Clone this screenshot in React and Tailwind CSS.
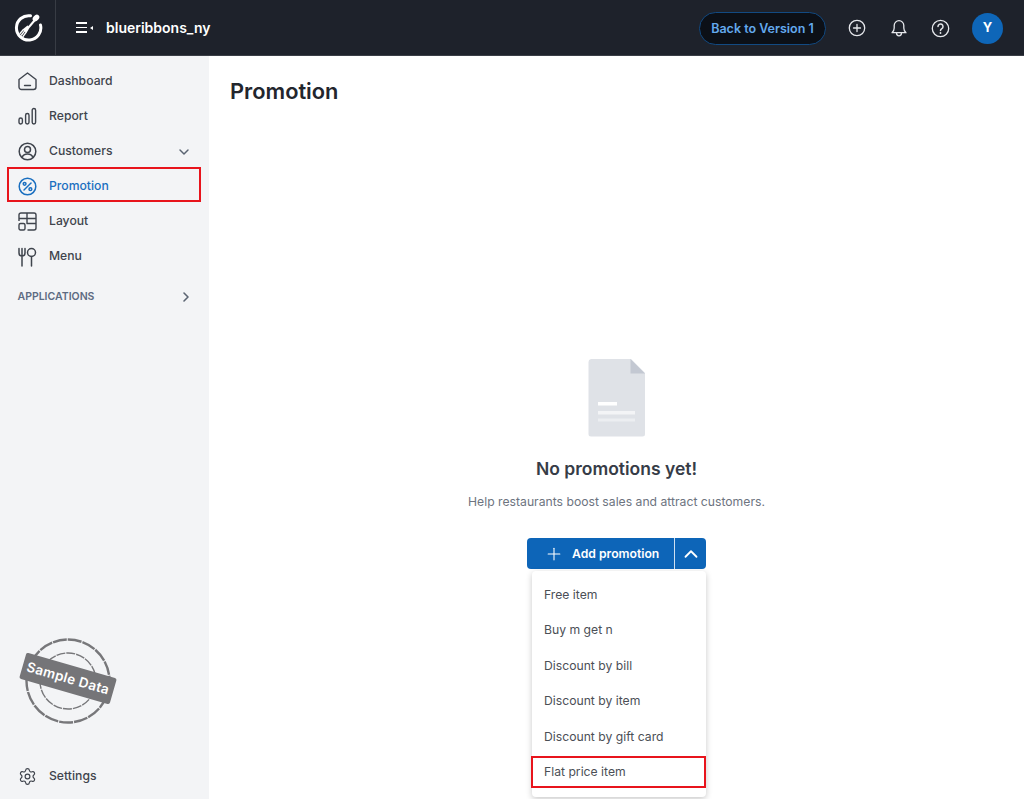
import React from 'react';
import { ChevronDown, ChevronRight, ChevronUp, Plus, Settings } from 'lucide-react';

const LogoIcon = () => (
  <svg width="30" height="30" viewBox="0 0 30 30" fill="none" stroke="#fff">
    <path d="M17.500 2.800A12.200 12.200 0 1 0 27.500 12" strokeWidth="3" strokeLinecap="round" />
    <ellipse cx="23" cy="5" rx="2.800" ry="3.800" transform="rotate(42 23 5)" fill="#fff" stroke="none" />
    <path d="M21.500 7.500 16 14" strokeWidth="2" />
    <path d="M17 14 13.500 20 9.500 16.500 14.500 12.500Z" fill="#fff" stroke="none" />
    <path d="M10 17 7 20.500M11.500 18.200 8.500 22M13 19.500 10 23.500" strokeWidth="1.300" strokeLinecap="round" />
  </svg>
);

const HomeIcon = () => (
  <svg width="19" height="19" viewBox="0 0 19 19" fill="none" stroke="#3f444d" strokeWidth="1.400" strokeLinejoin="round" strokeLinecap="round">
    <path d="M1 7.500 9.500 1 18 7.500V15a2.500 2.500 0 0 1-2.500 2.500h-12A2.500 2.500 0 0 1 1 15Z" />
    <path d="M6.500 13.500h6" />
  </svg>
);

const ReportIcon = () => (
  <svg width="19" height="19" viewBox="0 0 19 19" fill="none" stroke="#3f444d" strokeWidth="1.400">
    <rect x="1" y="11" width="3.400" height="6" rx="1.700" />
    <rect x="7.600" y="6.500" width="3.400" height="10.500" rx="1.700" />
    <rect x="14.200" y="1.500" width="3.400" height="15.500" rx="1.700" />
  </svg>
);

const UserIcon = () => (
  <svg width="19" height="19" viewBox="0 0 19 19" fill="none" stroke="#3f444d" strokeWidth="1.500">
    <circle cx="9.500" cy="9.500" r="8.300" />
    <circle cx="9.500" cy="7.500" r="3" />
    <path d="M4 15.500c1-2.600 3-3.400 5.500-3.400s4.500.8 5.500 3.400" />
  </svg>
);

const PercentIcon = () => (
  <svg width="19" height="19" viewBox="0 0 19 19" fill="none" stroke="#1a6fc0" strokeWidth="1.500">
    <circle cx="9.500" cy="9.500" r="8.300" />
    <path d="M6 13 13 6" strokeLinecap="round" />
    <circle cx="6.600" cy="6.800" r="1.400" />
    <circle cx="12.400" cy="12.200" r="1.400" />
  </svg>
);

const LayoutIcon = () => (
  <svg width="19" height="19" viewBox="0 0 19 19" fill="none" stroke="#3f444d" strokeWidth="1.400" strokeLinejoin="round">
    <path d="M1 9V3a2 2 0 0 1 2-2h13a2 2 0 0 1 2 2v13a2 2 0 0 1-2 2H9.500" />
    <path d="M1 6.500h17M9 1v10.500h9" />
    <rect x="1" y="11.500" width="6" height="6.500" rx="1.500" />
  </svg>
);

const MenuIcon = () => (
  <svg width="19" height="20" viewBox="0 0 19 20" fill="none" stroke="#3f444d" strokeWidth="1.500" strokeLinecap="round">
    <path d="M1 1.500V6a3 3 0 0 0 3 3h0a3 3 0 0 0 3-3V1.500M4 1.500V19" />
    <circle cx="13.500" cy="5.500" r="4" />
    <path d="M13.500 9.500V19" />
  </svg>
);

const PlusCircleIcon = () => (
  <svg width="18" height="18" viewBox="0 0 18 18" fill="none" stroke="#e5e7eb" strokeWidth="1.300">
    <circle cx="9" cy="9" r="7.700" />
    <path d="M9 5.500v7M5.500 9h7" strokeLinecap="round" />
  </svg>
);

const BellIcon = () => (
  <svg width="16" height="18" viewBox="0 0 16 18" fill="none" stroke="#e5e7eb" strokeWidth="1.300" strokeLinecap="round" strokeLinejoin="round">
    <path d="M1 13.700h14c-1.500-1.200-2.200-2.500-2.200-4.700V6.500a4.800 4.800 0 0 0-9.600 0V9c0 2.200-.7 3.500-2.200 4.700Z" />
    <path d="M5.500 14c0 1.800 1 2.800 2.500 2.800s2.500-1 2.500-2.800" />
  </svg>
);

const HelpIcon = () => (
  <svg width="19" height="19" viewBox="0 0 19 19" fill="none" stroke="#e5e7eb" strokeWidth="1.300">
    <circle cx="9.500" cy="9.500" r="8.200" />
    <path d="M7 7.500a2.500 2.500 0 1 1 3.800 2.100c-.9.600-1.300 1-1.300 2" strokeWidth="1.500" strokeLinecap="round" />
    <circle cx="9.500" cy="14" r="0.900" fill="#e5e7eb" stroke="none" />
  </svg>
);

const NavRow = ({ icon, label, active, right }) => (
  <div className={`h-[35px] flex items-center pl-[18px] pr-[17px] ${active ? 'text-[#1a6fc0]' : 'text-[#3f444d]'}`}>
    <span className="w-[31px] flex items-center shrink-0">{icon}</span>
    <span className="flex-1 text-[12.200px] font-medium">{label}</span>
    {right}
  </div>
);

const Stamp = () => (
  <div className="relative w-[100px] h-[90px] ml-[20px]">
    <svg width="100" height="90" viewBox="0 0 100 90" fill="none" stroke="#77777a">
      <circle cx="48" cy="43" r="41.500" strokeWidth="2.400" strokeDasharray="14 1" />
      <circle cx="48" cy="43" r="28" strokeWidth="1.400" strokeDasharray="9 1" />
    </svg>
    <div className="absolute left-[1px] top-[27px] w-[94px] h-[27px] bg-[#757578] text-white text-[13.500px] font-semibold tracking-[0.300px] flex items-center justify-center rotate-[16deg] rounded-[2px] whitespace-nowrap">
      Sample Data
    </div>
  </div>
);

const DocIcon = () => (
  <svg width="58" height="78" viewBox="0 0 58 78" className="block">
    <path d="M3 0H43L57 14V75a2.500 2.500 0 0 1-2.500 2.500H3A2.500 2.500 0 0 1 .5 75V3A3 3 0 0 1 3 0Z" fill="#dfe2e7" />
    <path d="M42.500 0 57 14.500H42.500Z" fill="#c3c8d2" />
    <rect x="10" y="43" width="19" height="3.500" fill="#fff" />
    <rect x="10" y="52" width="37" height="3.500" fill="#f3f4f6" />
    <rect x="10" y="59.500" width="37" height="3" fill="#eceef1" />
  </svg>
);

const items = ['Free item', 'Buy m get n', 'Discount by bill', 'Discount by item', 'Discount by gift card'];

export default function App() {
  return (
    <div className="h-[799px] w-[1024px] overflow-hidden flex flex-col bg-white font-['Inter',sans-serif]">
      <header className="h-[56px] shrink-0 bg-[#1e222b] flex items-center border-b border-[#3a3e46]">
        <div className="w-[56px] h-full flex items-center justify-center border-r border-[#383c44]">
          <LogoIcon />
        </div>
        <div className="ml-[20px] flex items-center gap-[1px] w-[18px]">
          <div className="flex flex-col gap-[3px]">
            <span className="w-[11px] h-[1.500px] bg-white block" />
            <span className="w-[11px] h-[1.500px] bg-white block" />
            <span className="w-[11px] h-[1.500px] bg-white block" />
          </div>
          <span className="ml-[2px] border-y-[2.500px] border-r-[3px] border-y-transparent border-r-white" />
        </div>
        <span className="ml-[12px] text-white text-[14px] font-semibold flex-1">blueribbons_ny</span>
        <button className="h-[33px] w-[127px] mt-[1px] rounded-full bg-[#0c1017] border border-[#124a82] text-[#63a9ed] text-[12.500px] font-semibold">
          <span className="relative top-[1px]">Back to Version 1</span>
        </button>
        <span className="ml-[22px] mt-[1px]"><PlusCircleIcon /></span>
        <span className="ml-[25px] mt-[1px]"><BellIcon /></span>
        <span className="ml-[24px] mt-[1px]"><HelpIcon /></span>
        <div className="ml-[22px] mr-[21px] mt-[1px] w-[31px] h-[31px] rounded-full bg-[#0e66b8] text-white text-[13px] font-bold flex items-center justify-center">
          Y
        </div>
      </header>
      <div className="flex-1 flex min-h-0">
        <aside className="w-[209px] shrink-0 bg-[#f3f4f6] flex flex-col pt-[8px] pb-[5px]">
          <NavRow icon={<HomeIcon />} label="Dashboard" />
          <NavRow icon={<ReportIcon />} label="Report" />
          <NavRow icon={<UserIcon />} label="Customers" right={<ChevronDown size={16} className="text-[#5b6472]" strokeWidth={2.200} />} />
          <div className="relative">
            <NavRow icon={<PercentIcon />} label="Promotion" active />
            <div className="absolute left-[7px] -top-[2px] w-[194px] h-[35px] border-2 border-[#e8141c]" />
          </div>
          <NavRow icon={<LayoutIcon />} label="Layout" />
          <NavRow icon={<MenuIcon />} label="Menu" />
          <div className="mt-[5px] h-[35px] flex items-center pl-[17.500px] pr-[15px] justify-between">
            <span className="text-[10.500px] font-semibold text-[#5d6b82]">APPLICATIONS</span>
            <ChevronRight size={16} className="text-[#5b6472]" strokeWidth={2.400} />
          </div>
          <div className="mt-auto mb-[31px]">
            <Stamp />
          </div>
          <NavRow icon={<Settings size={19} className="text-[#3f444d]" strokeWidth={1.500} />} label="Settings" />
        </aside>
        <main className="flex-1 min-w-0 relative px-[21px] pt-[20px]">
          <h1 className="text-[21.800px] leading-[30px] font-semibold text-[#23262d]">Promotion</h1>
          <div className="mt-[253px] flex flex-col items-center">
            <DocIcon />
            <h2 className="mt-[20px] text-[17.500px] leading-[24px] font-semibold text-[#363c47]">No promotions yet!</h2>
            <p className="mt-[11px] text-[12.200px] leading-[20px] text-[#6d7480]">Help restaurants boost sales and attract customers.</p>
            <div className="mt-[26px] relative w-[179px]">
              <div className="h-[31px] bg-[#0d65b8] rounded-[4px] flex text-white">
                <div className="w-[148px] flex items-center pl-[17px] gap-[8px] border-r border-[#cfe0f1]">
                  <Plus size={20} strokeWidth={1.300} />
                  <span className="relative top-[1px] text-[12.200px] font-semibold">Add promotion</span>
                </div>
                <div className="flex-1 flex items-center justify-center">
                  <ChevronUp size={22} strokeWidth={2} />
                </div>
              </div>
              <div className="absolute left-[5px] top-[33px] w-[174px] h-[226px] bg-white rounded-[4px] shadow-[0_2px_6px_rgba(0,0,0,0.22)] pt-[6px]">
                {items.map((item) => (
                  <div key={item} className="h-[35.500px] flex items-center pl-[12px] text-[12.200px] text-[#4b4f56]">{item}</div>
                ))}
                <div className="h-[32px] mt-[1px] pt-[1px] flex items-center pl-[11px] -ml-[1px] text-[12.200px] text-[#4b4f56] border-2 border-[#e8141c]">Flat price item</div>
              </div>
            </div>
          </div>
        </main>
      </div>
    </div>
  );
}
